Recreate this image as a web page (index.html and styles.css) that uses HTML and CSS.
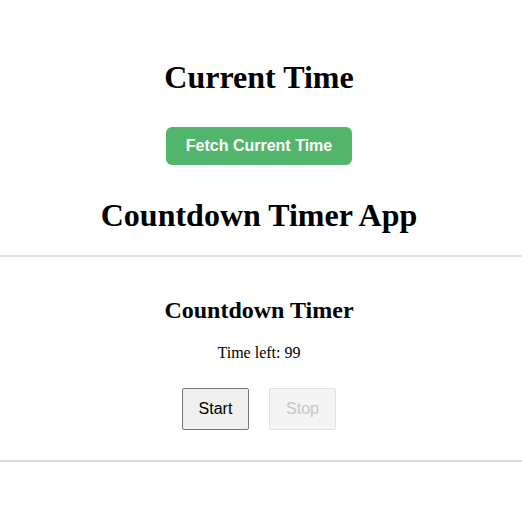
FILE: index.html
```html
<!DOCTYPE html>
<html>
<head>
<meta charset="utf-8">
<link rel="stylesheet" href="styles.css">
</head>
<body>
<div class="app">
  <section class="clock">
    <h1>Current Time</h1>
    <button class="fetch">Fetch Current Time</button>
  </section>
  <h1 class="title">Countdown Timer App</h1>
  <section class="timer">
    <h2>Countdown Timer</h2>
    <p class="left">Time left: 99</p>
    <div class="controls">
      <button class="ctl">Start</button>
      <button class="ctl" disabled>Stop</button>
    </div>
  </section>
</div>
</body>
</html>
```
FILE: styles.css
```css
html, body { margin: 0; padding: 0; background: #fff; }
body { font-family: "Liberation Serif", "Times New Roman", serif; color: #000; }
.app { text-align: center; padding: 38px 4px 0 0; }
h1 { font-size: 32px; font-weight: bold; margin: 21px 0; }
.clock h1 { margin: 21px 0 31px; }
.fetch {
  background: #52b56c; color: #fff; border: none; border-radius: 6px;
  font-family: "Liberation Sans", Arial, sans-serif; font-weight: bold; font-size: 16px;
  padding: 0 20px; height: 38px; white-space: nowrap;
}
.title { margin: 32px 0 21px; }
.timer { border-top: 2px solid #ddd; border-bottom: 2px solid #ddd; padding: 20px 4px 30px 0; margin-right: -4px; }
.timer h2 { font-size: 24px; margin: 20px 0; }
.left { font-size: 16px; margin: 15px 0 16px; }
.controls { display: flex; justify-content: center; gap: 20px; padding-top: 10px; }
.ctl {
  font-family: "Liberation Sans", Arial, sans-serif; font-size: 16px; padding: 0 15px;
  width: 67px; height: 42px; background: #efefef; border: 1px solid #767676; border-radius: 2px; color: #000;
}
.ctl:disabled { background: #f4f4f4; border-color: #e2e2e2; color: #c8c8c8; }
```
